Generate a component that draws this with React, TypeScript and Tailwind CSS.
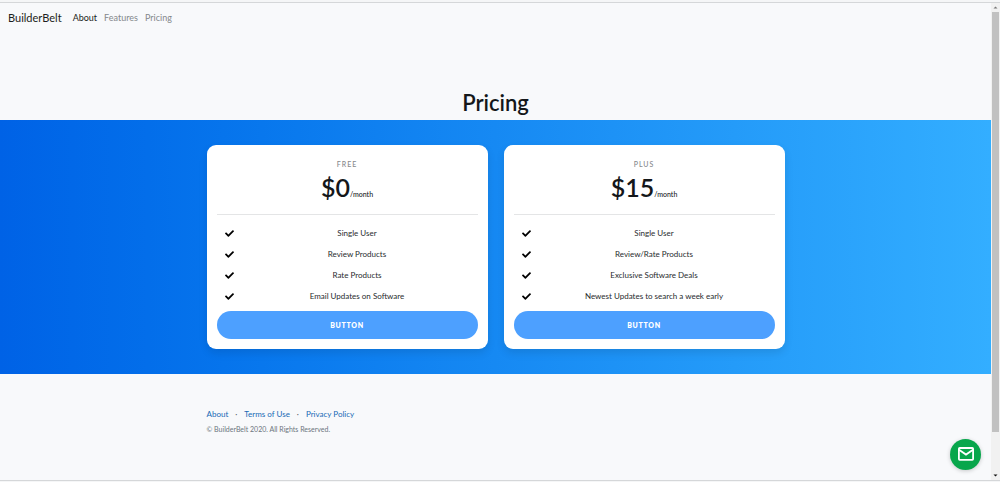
import { FaCheck } from "react-icons/fa";

type Plan = { name: string; price: string; features: string[] };

const plans: Plan[] = [
  {
    name: "Free",
    price: "$0",
    features: ["Single User", "Review Products", "Rate Products", "Email Updates on Software"],
  },
  {
    name: "Plus",
    price: "$15",
    features: [
      "Single User",
      "Review/Rate Products",
      "Exclusive Software Deals",
      "Newest Updates to search a week early",
    ],
  },
];

function NavBar() {
  return (
    <nav className="flex h-[30px] items-center px-2 text-[9px] leading-3">
      <a href="#home" className="mr-[11px] text-[11px] text-[#1c1e20]">BuilderBelt</a>
      <div className="flex gap-[7px]">
        <a href="#about" className="text-[#1c1e20]">About</a>
        <a href="#features" className="text-[#85888b]">Features</a>
        <a href="#pricing" className="text-[#85888b]">Pricing</a>
      </div>
    </nav>
  );
}

function PlanCard({ name, price, features }: Plan) {
  return (
    <article className="flex-1 rounded-[9px] bg-white px-[10px] pt-[13px] pb-[10px] text-center shadow-[0_4px_8px_rgba(0,0,0,0.1)]">
      <h2 className="text-[7px] leading-3 font-medium tracking-[1px] text-[#85888b] uppercase">{name}</h2>
      <p className="mt-[2px] text-[25px] leading-[30px] font-semibold text-[#14171a]">
        {price}
        <span className="text-[7px] leading-none font-medium">/month</span>
      </p>
      <hr className="mt-3 mb-2 border-[#e4e5e6]" />
      <ul className="text-[8px] leading-[13px] text-[#282b2e]">
        {features.map((feature) => (
          <li key={feature} className="flex items-center py-1 pl-2">
            <FaCheck className="mr-[3px] size-[9px] text-black" aria-hidden="true" />
            <span className="flex-1">{feature}</span>
          </li>
        ))}
      </ul>
      <button
        type="button"
        className="mt-1 block h-7 w-full rounded-full bg-[#4da0ff] text-[7px] font-extrabold tracking-widest text-white uppercase"
      >
        Button
      </button>
    </article>
  );
}

function Footer() {
  return (
    <footer className="mx-auto w-[578px] max-w-full pt-[34px] text-[8px] leading-3">
      <div className="flex gap-[7px] text-[#1769b5]">
        <a href="#about">About</a>
        <span className="text-[#55595d]">·</span>
        <a href="#terms">Terms of Use</a>
        <span className="text-[#55595d]">·</span>
        <a href="#privacy">Privacy Policy</a>
      </div>
      <p className="mt-[3px] text-[7px] text-[#6c757d]">© BuilderBelt 2020. All Rights Reserved.</p>
    </footer>
  );
}

function ScrollRail() {
  return (
    <div className="flex w-[9px] flex-col items-center bg-[#f1f1f1]" aria-hidden="true">
      <svg className="h-[9px] w-[9px] shrink-0" viewBox="0 0 9 9">
        <path d="M2.5 5.5 4.5 3.5 6.5 5.5Z" fill="#777" />
      </svg>
      <div className="w-[7px] flex-[420] bg-[#c1c1c1]" />
      <div className="flex-[39]" />
      <svg className="h-[9px] w-[9px] shrink-0" viewBox="0 0 9 9">
        <path d="M2.5 3.5 4.5 5.5 6.5 3.5Z" fill="#111" />
      </svg>
    </div>
  );
}

export default function App() {
  return (
    <div className="flex min-h-screen flex-col bg-[#f8f9fa] font-['Lato',sans-serif]">
      <div className="h-[3px] border-b border-[#d5d7d9] bg-[#f5f6f7]" />
      <div className="flex flex-1">
        <div className="flex-1 bg-[#f8f9fb]">
          <NavBar />
          <main>
            <h1 className="pt-[57px] pb-1 text-center text-[22px] leading-[26px] font-semibold text-[#14171a]">
              Pricing
            </h1>
            <section className="bg-linear-to-r from-[#0062e6] to-[#33aeff] py-[25px]">
              <div className="mx-auto flex w-[578px] max-w-full gap-4">
                {plans.map((plan) => (
                  <PlanCard key={plan.name} {...plan} />
                ))}
              </div>
            </section>
          </main>
          <Footer />
        </div>
        <ScrollRail />
      </div>
      <div className="h-[2px] border-t border-[#d5d7d9] bg-[#f5f6f7]" />
      <button
        type="button"
        aria-label="Contact us"
        className="fixed right-[19px] bottom-3 flex size-[31px] items-center justify-center rounded-full bg-[#08a64c] pb-[2px] shadow-[0_1px_4px_rgba(0,0,0,0.2)]"
      >
        <svg className="h-[14px] w-4" viewBox="0 0 16 14" fill="none" stroke="white" strokeWidth="1.8">
          <rect x="0.9" y="1" width="14.2" height="11.8" rx="0.8" />
          <path d="M1 2.8 8 7.6 15 2.8" />
        </svg>
      </button>
    </div>
  );
}
